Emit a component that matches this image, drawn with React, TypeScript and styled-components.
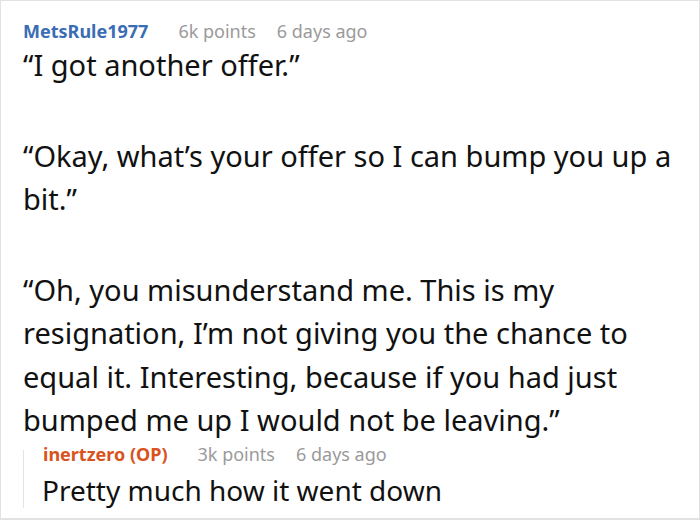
import React from 'react'
import styled, { createGlobalStyle } from 'styled-components'

const Global = createGlobalStyle`
  html, body {
    margin: 0;
    padding: 0;
    background: #ffffff;
  }
  * { box-sizing: border-box; }
`

const Card = styled.div`
  width: 700px;
  height: 520px;
  border: 1px solid #e2e2e2;
  border-bottom-width: 2px;
  padding: 18px 14px 0 22px;
  font-family: "Noto Sans", "Open Sans", sans-serif;
  color: #111111;
  overflow: hidden;
`

const Meta = styled.div`
  display: flex;
  align-items: baseline;
  font-size: 18px;
  line-height: 24px;
  white-space: nowrap;
`

const Author = styled.span<{ $op?: boolean }>`
  font-weight: 700;
  color: ${p => (p.$op ? '#d9531e' : '#3a6db5')};
  margin-right: 30px;
`

const Info = styled.span`
  color: #9a9a9a;
  margin-right: 21px;
`

const Body = styled.div`
  margin-top: 0;
  font-size: 29px;
  line-height: 43.5px;

  p {
    margin: 0 0 47px 0;
  }
  p:last-child {
    margin-bottom: 0;
  }
`

const Reply = styled.div`
  position: relative;
  margin-top: 0;
  padding-left: 20px;

  &::before {
    content: '';
    position: absolute;
    left: 0;
    top: 8px;
    bottom: 6px;
    width: 1px;
    background: #e4e4e4;
  }
`

const ReplyText = styled.div`
  font-size: 28px;
  line-height: 48px;
  margin-left: -1px;
`

export default function App() {
  return (
    <>
      <Global />
      <Card>
        <Meta>
          <Author>MetsRule1977</Author>
          <Info>6k points</Info>
          <Info>6 days ago</Info>
        </Meta>
        <Body>
          <p>“I got another offer.”</p>
          <p>“Okay, what’s your offer so I can bump you up a bit.”</p>
          <p>
            “Oh, you misunderstand me. This is my resignation, I’m not giving you the chance to
            equal it. Interesting, because if you had just bumped me up I would not be leaving.”
          </p>
        </Body>
        <Reply>
          <Meta>
            <Author $op>inertzero (OP)</Author>
            <Info>3k points</Info>
            <Info>6 days ago</Info>
          </Meta>
          <ReplyText>Pretty much how it went down</ReplyText>
        </Reply>
      </Card>
    </>
  )
}
